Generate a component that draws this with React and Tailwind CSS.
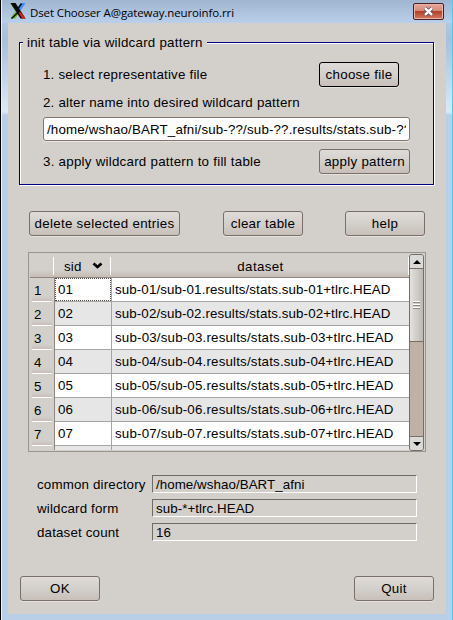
import React from "react";

const files = ["01", "02", "03", "04", "05", "06", "07"];

function Button({ children, className = "", focused = false }) {
  return (
    <button
      className={`h-[25px] shrink-0 whitespace-nowrap rounded-[3px] border bg-linear-to-b from-[#dedbd8] via-[#d3d0cc] to-[#c8bfb9] text-center leading-[22px] tracking-[0.28px] shadow-[0_1px_0_#e6e3df] ${
        focused ? "border-black" : "border-[#7a6f69]"
      } ${className}`}
    >
      {children}
    </button>
  );
}

function XLogo() {
  return (
    <svg width="16" height="16" viewBox="0 0 16 16" className="mt-[3px] ml-2 shrink-0">
      <path d="M11 0H15.5L10.5 7.5L7.5 5.5Z" fill="#3c8cf5" />
      <path d="M5.5 8L8.5 11L5 15.5H0.5Z" fill="#68c010" />
      <path d="M0.5 0.5L3 0.5L7 6.5L5 8Z" fill="#68c010" />
      <path d="M0.5 0H5.5L15.5 15.5H10.5Z" fill="#080808" />
      <path d="M11.5 0.5L8 5.5M9 8.5L1.5 15.5" stroke="#080808" strokeWidth="1.4" fill="none" />
      <path d="M10 8.5L15.7 15.5H12.2L8.8 10.3Z" fill="#dc2020" />
    </svg>
  );
}

function TitleBar() {
  return (
    <header className="flex h-[23px] bg-linear-to-b from-[#a0b5d0] to-[#b9cfea]">
      <XLogo />
      <h1 className="ml-[4px] w-[383px] whitespace-nowrap pt-px font-['Open_Sans',sans-serif] text-[11.5px] leading-[23px] tracking-[-0.12px] text-black">
        Dset Chooser A@gateway.neuroinfo.rri
      </h1>
      <button className="mt-[3px] flex h-[17px] w-[31px] shrink-0 items-center justify-center rounded-[2px] border border-[#4b1d25] bg-[linear-gradient(#e3a79b_0%,#d98978_45%,#b83f26_50%,#cf7962_100%)] shadow-[inset_0_0_0_1px_#e8b5aa]">
        <svg width="13" height="11" viewBox="0 0 13 11">
          <path d="M3 2.2L10 8.8M10 2.2L3 8.8" stroke="#555563" strokeWidth="4" />
          <path d="M3 2.2L10 8.8M10 2.2L3 8.8" stroke="#fff" strokeWidth="2.4" />
        </svg>
      </button>
    </header>
  );
}

function PatternGroup() {
  return (
    <fieldset className="relative ml-[11px] mt-[19px] h-[143px] w-[415px] shrink-0 border border-[#000080] pl-[23px] pt-[19px] shadow-[1px_1px_0_#fff,inset_1px_1px_0_#fff]">
      <span className="absolute -top-[10px] left-[3px] w-[184px] whitespace-nowrap bg-[#d3d0cb] pl-1 leading-[19px] tracking-[0.24px]">
        init table via wildcard pattern
      </span>
      <div className="flex h-[25px] items-center">
        <span className="w-[276px]">1. select representative file</span>
        <Button focused className="w-[80px]">choose file</Button>
      </div>
      <div className="mt-[6px] h-[20px] leading-[20px]">2. alter name into desired wildcard pattern</div>
      <div className="mt-[4px] h-[24px] w-[367px] overflow-hidden whitespace-nowrap rounded-[3px] border border-[#81756e] bg-white px-[3px] leading-[23px] shadow-[0_1px_0_#e9e6e2]">
        <div className="overflow-hidden tracking-[0.16px]">/home/wshao/BART_afni/sub-??/sub-??.results/stats.sub-??</div>
      </div>
      <div className="mt-[8px] flex h-[25px] items-center">
        <span className="w-[276px] tracking-[0.25px]">3. apply wildcard pattern to fill table</span>
        <Button className="w-[91px]">apply pattern</Button>
      </div>
    </fieldset>
  );
}

function ScrollBar() {
  return (
    <div className="mt-px flex h-[197px] w-[15px] shrink-0 flex-col rounded-[3px] border border-[#776d67] bg-[#bfb1a6]">
      <div className="flex h-[14px] items-center justify-center rounded-t-[2px] border-b border-[#776d67] bg-[#dcdad6]">
        <svg width="8" height="4" viewBox="0 0 8 4"><path d="M0 4L4 0L8 4Z" fill="#000" /></svg>
      </div>
      <div className="flex h-[73px] flex-col items-center justify-center gap-px border-b border-[#776d67] bg-linear-to-r from-[#e4e2df] to-[#bdb8b3]">
        <i className="h-[2px] w-[7px] border-b border-[#938880] bg-white" />
        <i className="h-[2px] w-[7px] border-b border-[#938880] bg-white" />
        <i className="h-[2px] w-[7px] border-b border-[#938880] bg-white" />
      </div>
      <div className="grow" />
      <div className="flex h-[14px] items-center justify-center rounded-b-[2px] border-t border-[#776d67] bg-[#dcdad6]">
        <svg width="8" height="4" viewBox="0 0 8 4"><path d="M0 0L4 4L8 0Z" fill="#000" /></svg>
      </div>
    </div>
  );
}

function DatasetTable() {
  return (
    <section className="ml-5 mt-4 flex h-[200px] w-[398px] shrink-0 overflow-hidden border border-[#9a948e]">
      <div className="h-[197px] w-[380px] shrink-0 overflow-hidden pl-px">
        <div className="flex h-[25px] border-b border-[#8e8782] bg-linear-to-b from-[#d3d0cb] from-70% to-[#c6bcb6]">
          <div className="mt-1 h-[18px] w-[24px] border-r border-white" />
          <div className="mt-1 flex h-[18px] w-[57px] border-r border-white pl-[10px] leading-[19px]">
            sid
            <svg width="11" height="8" viewBox="0 0 11 8" className="ml-[10px] mt-[5px]">
              <path d="M1.5 1.5L5.5 5L9.5 1.5" stroke="#000" strokeWidth="2.8" fill="none" />
            </svg>
          </div>
          <div className="mt-1 h-[18px] w-[298px] border-r border-white pl-[2px] text-center leading-[19px] tracking-[0.38px]">dataset</div>
        </div>
        {files.map((id, i) => (
          <div key={id} className="flex h-[24px]">
            <div className="flex w-[25px] shrink-0 flex-col border-r border-[#8e8782] pl-[2px] pr-[2px]">
              <div className="h-[23px] bg-linear-to-b from-[#d3d0cb] from-80% to-[#c8beb8] pl-[2px] leading-[25px]">{i + 1}</div>
              <div className="h-px bg-white" />
            </div>
            <div className={`flex grow border-b border-[#a7a5a3] ${i % 2 ? "bg-[#e6e6e6]" : "bg-white"}`}>
              <div className={`w-[56px] shrink-0 border pl-[2px] leading-[21px] ${i === 0 ? "border-dotted border-[#55504b]" : "border-transparent"}`}>{id}</div>
              <div className={`grow whitespace-nowrap border-l border-[#a7a5a3] pl-[3px] leading-[23px] ${i < 2 ? "tracking-[0.11px]" : "tracking-[0.18px]"}`}>
                {`sub-${id}/sub-${id}.results/stats.sub-${id}+tlrc.HEAD`}
              </div>
            </div>
          </div>
        ))}
        <div className="flex h-[5px]">
          <div className="w-[25px] border-r border-[#8e8782]" />
          <div className="w-[57px] border-r border-[#a7a5a3] bg-[#e6e6e6]" />
          <div className="grow bg-[#e6e6e6]" />
        </div>
      </div>
      <ScrollBar />
    </section>
  );
}

function InfoRow({ label, value }) {
  return (
    <div className="flex h-[18px]">
      <span className="w-[115px] whitespace-nowrap pt-px leading-[18px] tracking-[0.17px]">{label}</span>
      <div className="h-[18px] w-[265px] border border-t-[#716b68] border-r-white border-b-white border-l-[#716b68] pl-[3px] leading-[17px] tracking-[0.06px]">{value}</div>
    </div>
  );
}

export default function App() {
  return (
    <div className="flex h-[620px] w-[453px] overflow-hidden bg-[#b9cfe8] font-['Liberation_Sans',Arial,sans-serif] text-[13.33px] tracking-[0.2px] text-black">
      <div className="w-px shrink-0 bg-black" />
      <div className="w-px shrink-0 bg-[#e8f1fa]" />
      <div className="w-[450px] shrink-0 bg-[linear-gradient(#b9cfea_0px,#a9bfdb_40px,#dce9f7_112px,#b9cfe8_115px)]">
        <TitleBar />
        <main className="ml-[6px] flex h-[591px] w-[438px] flex-col bg-[#d3d0cb]">
          <PatternGroup />
          <div className="ml-[21px] mt-[26px] flex">
            <Button className="w-[151px]">delete selected entries</Button>
            <Button className="ml-[43px] w-[80px]">clear table</Button>
            <Button className="ml-[42px] w-[80px]">help</Button>
          </div>
          <DatasetTable />
          <div className="ml-[29px] mt-[23px] flex flex-col gap-[6px]">
            <InfoRow label="common directory" value="/home/wshao/BART_afni" />
            <InfoRow label="wildcard form" value="sub-*+tlrc.HEAD" />
            <InfoRow label="dataset count" value="16" />
          </div>
          <div className="ml-3 mt-[35px] flex w-[414px] justify-between">
            <Button className="w-[80px]">OK</Button>
            <Button className="w-[80px]">Quit</Button>
          </div>
        </main>
      </div>
      <div className="w-px shrink-0 bg-[#38d5f5]" />
    </div>
  );
}
